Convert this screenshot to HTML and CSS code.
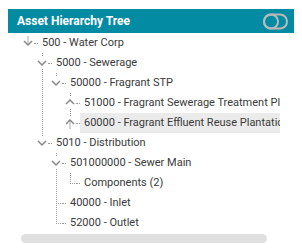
FILE: index.html
```html
<!DOCTYPE html>
<html>
<head>
<meta charset="utf-8">
<link rel="stylesheet" href="styles.css">
</head>
<body>
<div class="panel">
  <div class="header">
    <span class="title">Asset Hierarchy Tree</span>
    <svg class="toggle" width="25" height="17" viewBox="0 0 25 17">
      <rect x="1" y="1.5" width="23" height="14" rx="7" fill="none" stroke="#b9b9b9" stroke-width="2"/>
      <circle cx="8" cy="8.5" r="7" fill="none" stroke="#b9b9b9" stroke-width="2"/>
    </svg>
  </div>
  <div class="tree">
    <div class="row">
      <span class="cell h"><svg class="ico" width="10" height="12" viewBox="0 0 10 12"><path d="M5 0V9" stroke="#aaa" stroke-width="1" fill="none"/><path d="M1 5L5 9L9 5" stroke="#888" stroke-width="1.5" fill="none"/></svg></span>
      <span class="conn"></span><span class="label">500 - Water Corp</span>
    </div>
    <div class="row">
      <span class="cell"></span>
      <span class="cell v-h"><svg class="ico" width="10" height="12" viewBox="0 0 10 12"><path d="M1 5L5 9L9 5" stroke="#888" stroke-width="1.5" fill="none"/></svg></span>
      <span class="conn"></span><span class="label">5000 - Sewerage</span>
    </div>
    <div class="row">
      <span class="cell"></span><span class="cell v"></span>
      <span class="cell vt-h"><svg class="ico" width="10" height="12" viewBox="0 0 10 12"><path d="M1 5L5 9L9 5" stroke="#888" stroke-width="1.5" fill="none"/></svg></span>
      <span class="conn"></span><span class="label">50000 - Fragrant STP</span>
    </div>
    <div class="row">
      <span class="cell"></span><span class="cell v"></span><span class="cell"></span>
      <span class="cell v-h"><svg class="ico up" width="10" height="12" viewBox="0 0 10 12"><path d="M1 7L5 3L9 7" stroke="#888" stroke-width="1.5" fill="none"/></svg></span>
      <span class="conn"></span><span class="label">51000 - Fragrant Sewerage Treatment Plant</span>
    </div>
    <div class="row">
      <span class="cell"></span><span class="cell v"></span><span class="cell"></span>
      <span class="cell vt-h"><svg class="ico up" width="10" height="12" viewBox="0 0 10 12"><path d="M5 3V12" stroke="#aaa" stroke-width="1" fill="none"/><path d="M1 7L5 3L9 7" stroke="#888" stroke-width="1.5" fill="none"/></svg></span>
      <span class="conn"></span><span class="label selected">60000 - Fragrant Effluent Reuse Plantation</span>
    </div>
    <div class="row">
      <span class="cell"></span>
      <span class="cell vt-h"><svg class="ico" width="10" height="12" viewBox="0 0 10 12"><path d="M1 5L5 9L9 5" stroke="#888" stroke-width="1.5" fill="none"/></svg></span>
      <span class="conn"></span><span class="label">5010 - Distribution</span>
    </div>
    <div class="row">
      <span class="cell"></span><span class="cell"></span>
      <span class="cell v-h"><svg class="ico" width="10" height="12" viewBox="0 0 10 12"><path d="M1 5L5 9L9 5" stroke="#888" stroke-width="1.5" fill="none"/></svg></span>
      <span class="conn"></span><span class="label">501000000 - Sewer Main</span>
    </div>
    <div class="row">
      <span class="cell"></span><span class="cell"></span><span class="cell v"></span>
      <span class="cell vt-h"></span>
      <span class="conn"></span><span class="label">Components (2)</span>
    </div>
    <div class="row">
      <span class="cell"></span><span class="cell"></span>
      <span class="cell v-h"></span>
      <span class="conn"></span><span class="label">40000 - Inlet</span>
    </div>
    <div class="row">
      <span class="cell"></span><span class="cell"></span>
      <span class="cell vt-h"></span>
      <span class="conn"></span><span class="label">52000 - Outlet</span>
    </div>
  </div>
  <div class="scrollbar"><div class="thumb"></div></div>
</div>
</body>
</html>
```
FILE: styles.css
```css
html, body {
  margin: 0;
  padding: 0;
  background: #ffffff;
}
body {
  font-family: Roboto, "Liberation Sans", sans-serif;
}
.panel {
  margin: 9px 8px 0 8px;
  width: 286px;
}
.header {
  height: 24px;
  background: #048ba4;
  display: flex;
  align-items: center;
  justify-content: space-between;
  padding: 0 6px 0 9px;
}
.title {
  color: #ffffff;
  font-weight: 700;
  font-size: 12px;
}
.toggle {
  display: block;
}
.tree {
  width: 259px;
  padding-left: 13px;
  overflow: hidden;
}
.row {
  display: flex;
  align-items: center;
  height: 20px;
  white-space: nowrap;
}
.cell {
  flex: none;
  width: 14px;
  height: 20px;
  display: flex;
  align-items: center;
  justify-content: center;
  --vd: repeating-linear-gradient(to bottom, #9a9a9a 0 1px, transparent 1px 2px);
  --hd: repeating-linear-gradient(to right, #9a9a9a 0 1px, transparent 1px 2px);
}
.cell.v {
  background: var(--vd) 7px 0 / 1px 100% no-repeat;
}
.cell.h {
  background: var(--hd) 100% 10px / 7px 1px no-repeat;
}
.cell.v-h {
  background: var(--vd) 7px 0 / 1px 100% no-repeat, var(--hd) 100% 10px / 7px 1px no-repeat;
}
.cell.vt-h {
  background: var(--vd) 7px 0 / 1px 10px no-repeat, var(--hd) 100% 10px / 7px 1px no-repeat;
}
.ico {
  display: block;
  background: #ffffff;
  margin-top: -3px;
}
.ico.up {
  margin-top: 0;
}
.conn {
  flex: none;
  width: 3px;
  height: 1px;
  background: repeating-linear-gradient(to right, #9a9a9a 0 1px, transparent 1px 2px);
}
.label {
  font-size: 11px;
  color: #3a3a3a;
  padding: 0 4px;
  line-height: 20px;
}
.label.selected {
  background: #ebebeb;
}
.scrollbar {
  padding: 1px 0 0 13px;
}
.thumb {
  width: 246px;
  height: 9px;
  border-radius: 5px;
  background: #e0e0e0;
}
```
